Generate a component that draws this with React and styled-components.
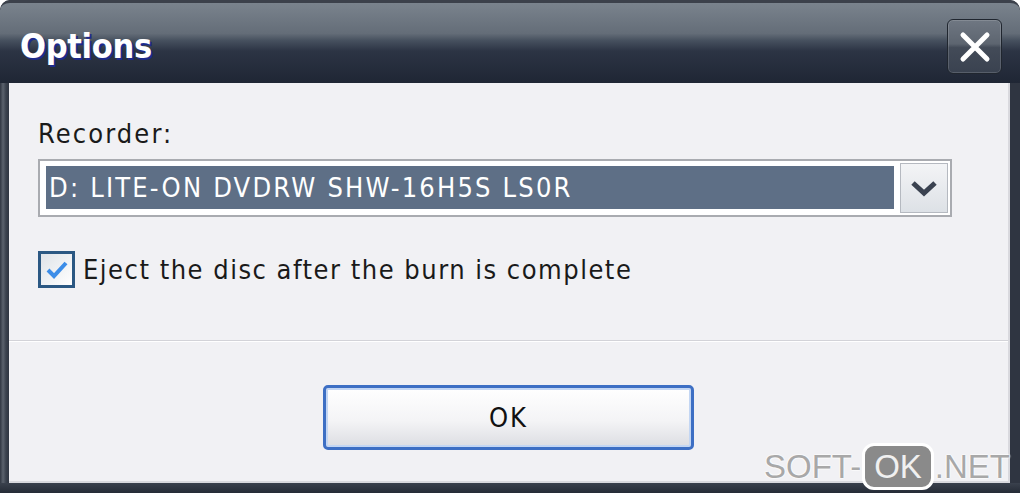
import React from "react";
import styled, { createGlobalStyle } from "styled-components";

const GlobalStyle = createGlobalStyle`
  html, body {
    margin: 0;
    padding: 0;
    background: #ffffff;
  }
  body {
    width: 1020px;
    height: 493px;
    overflow: hidden;
    font-family: "DejaVu Sans Condensed", "DejaVu Sans", sans-serif;
  }
`;

const Window = styled.div`
  position: relative;
  width: 1020px;
  height: 493px;
  box-sizing: border-box;
  display: flex;
  flex-direction: column;
  background: linear-gradient(90deg, #2f3541 0px, #5b626d 3px, #3a414d 6px, #2f3541 9px);
  border-radius: 10px 10px 0 0;
  overflow: hidden;
`;

const TitleBar = styled.div`
  height: 83px;
  flex: none;
  display: flex;
  align-items: center;
  justify-content: space-between;
  padding: 0 18px 0 20px;
  box-sizing: border-box;
  border-top: 3px solid #3c414b;
  border-radius: 10px 10px 0 0;
  background: linear-gradient(
    180deg,
    #7a838d 0%,
    #646d78 38%,
    #46505e 47%,
    #2c3444 60%,
    #1f2634 100%
  );
`;

const Title = styled.h1`
  margin: 6px 0 0 0;
  font-family: "DejaVu Sans Condensed", "DejaVu Sans", sans-serif;
  font-weight: bold;
  font-size: 34px;
  color: #ffffff;
  text-shadow: 2px 2px 0 #1d2a8c;
  letter-spacing: -0.3px;
`;

const CloseButton = styled.button`
  width: 55px;
  height: 55px;
  margin-top: 7px;
  padding: 0;
  display: flex;
  align-items: center;
  justify-content: center;
  border: 1px solid #20262f;
  border-radius: 6px;
  background: linear-gradient(180deg, #6f7782 0%, #5d6570 45%, #434b58 52%, #3a4250 100%);
  box-shadow: inset 0 0 0 1px rgba(255, 255, 255, 0.15);
`;

const Frame = styled.div`
  flex: 1;
  display: flex;
  padding: 0 10px 10px 9px;
  background: linear-gradient(180deg, transparent 0, transparent calc(100% - 10px), #3a414d calc(100% - 10px), #252b36 100%);
`;

const Body = styled.div`
  flex: 1;
  display: flex;
  flex-direction: column;
  background: #f1f1f4;
  border-right: 2px solid #d9d9de;
  border-bottom: 2px solid #d9d9de;
`;

const Content = styled.div`
  display: flex;
  flex-direction: column;
  padding: 35px 56px 0 29px;
  height: 257px;
  box-sizing: border-box;
`;

const Label = styled.div`
  font-size: 27px;
  letter-spacing: 2.1px;
  color: #1a1a1a;
  line-height: 32px;
`;

const Select = styled.div`
  margin-top: 9px;
  height: 58px;
  display: flex;
  align-items: stretch;
  box-sizing: border-box;
  border: 2px solid #a9abb0;
  background: #ffffff;
  padding: 5px 2px 2px 6px;
`;

const SelectValue = styled.div`
  flex: 1;
  margin-bottom: 4px;
  display: flex;
  align-items: center;
  padding-left: 3px;
  background: #5e6f86;
  color: #ffffff;
  font-size: 27px;
  letter-spacing: 2.2px;
`;

const SelectArrow = styled.div`
  width: 46px;
  margin: -3px 0 0 6px;
  display: flex;
  align-items: center;
  justify-content: center;
  background: linear-gradient(180deg, #f3f4f6 0%, #dde1e6 100%);
  border: 1px solid #b5b9c0;
`;

const CheckRow = styled.label`
  margin-top: 34px;
  display: flex;
  align-items: center;
  gap: 8px;
  font-size: 27px;
  letter-spacing: 1.5px;
  color: #1a1a1a;
`;

const CheckBox = styled.span`
  width: 37px;
  height: 37px;
  flex: none;
  box-sizing: border-box;
  display: flex;
  align-items: center;
  justify-content: center;
  border: 3px solid #2b5883;
  background: linear-gradient(135deg, #dfe3e8 0%, #ffffff 100%);
`;

const Separator = styled.div`
  height: 1px;
  background: #d3d3d8;
  border-bottom: 1px solid #ffffff;
`;

const Footer = styled.div`
  flex: 1;
  display: flex;
  justify-content: center;
  padding-top: 43px;
`;

const OkButton = styled.button`
  width: 371px;
  height: 65px;
  box-sizing: border-box;
  border: 3px solid #3d6fc4;
  border-radius: 5px;
  background: linear-gradient(180deg, #ffffff 0%, #f4f4f6 55%, #dcdde2 100%);
  box-shadow: inset 0 0 0 2px #c3d6f3;
  font-family: "DejaVu Sans Condensed", "DejaVu Sans", sans-serif;
  font-size: 27px;
  letter-spacing: 2px;
  color: #111111;
`;

const Watermark = styled.div`
  position: absolute;
  right: 10px;
  bottom: 3px;
  display: flex;
  align-items: center;
  font-family: "Liberation Sans", Arial, sans-serif;
  font-size: 33px;
  color: #a8a8a8;
  text-shadow: 0 0 2px #ffffff, 0 0 2px #ffffff, 0 0 2px #ffffff;
`;

const WatermarkBadge = styled.span`
  margin: 0 1px 0 1px;
  padding: 2px 9px 1px 9px;
  background: #8a8a8a;
  border: 3px solid #ffffff;
  border-radius: 12px;
  color: #f0f0f0;
  text-shadow: none;
`;

export default function App() {
  return (
    <>
      <GlobalStyle />
      <Window>
        <TitleBar>
          <Title>Options</Title>
          <CloseButton aria-label="Close">
            <svg width="32" height="32" viewBox="0 0 32 32">
              <path d="M4 4 L28 28 M28 4 L4 28" stroke="#ffffff" strokeWidth="5" strokeLinecap="round" />
            </svg>
          </CloseButton>
        </TitleBar>
        <Frame>
          <Body>
            <Content>
              <Label>Recorder:</Label>
              <Select>
                <SelectValue>D: LITE-ON DVDRW SHW-16H5S LS0R</SelectValue>
                <SelectArrow>
                  <svg width="28" height="18" viewBox="0 0 28 18">
                    <path d="M3 4 L14 14 L25 4" fill="none" stroke="#3a4250" strokeWidth="5" />
                  </svg>
                </SelectArrow>
              </Select>
              <CheckRow>
                <CheckBox>
                  <svg width="24" height="22" viewBox="0 0 24 22">
                    <path d="M3 11 L9 17 L21 4" fill="none" stroke="#3c8de8" strokeWidth="4" />
                  </svg>
                </CheckBox>
                Eject the disc after the burn is complete
              </CheckRow>
            </Content>
            <Separator />
            <Footer>
              <div>
                <OkButton>OK</OkButton>
              </div>
            </Footer>
          </Body>
        </Frame>
        <Watermark>
          SOFT-<WatermarkBadge>OK</WatermarkBadge>.NET
        </Watermark>
      </Window>
    </>
  );
}
